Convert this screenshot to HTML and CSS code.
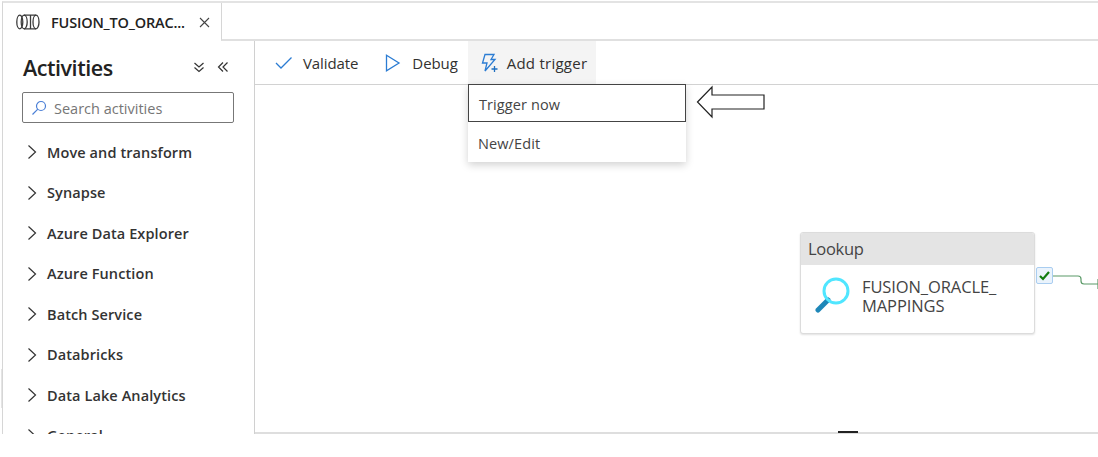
FILE: index.html
```html
<!DOCTYPE html>
<html lang="en">
<head>
<meta charset="utf-8">
<title>FUSION_TO_ORACLE pipeline</title>
<link rel="stylesheet" href="styles.css">
</head>
<body>
<div class="frame">
  <div class="tabbar">
    <div class="tab">
      <svg class="pipe" width="24" height="16" viewBox="0 0 24 16" fill="none" stroke="#3b3b3b" stroke-width="1.300"><ellipse cx="3.800" cy="8" rx="3" ry="6.800"/><ellipse cx="8.200" cy="8" rx="3" ry="6.800"/><path d="M8 1.200h12M8 14.800h12M14.500 1.500v13"/><ellipse cx="20" cy="8" rx="3" ry="6.800"/></svg>
      <span class="tab-title">FUSION_TO_ORAC...</span>
      <svg class="tab-close" width="11" height="11" viewBox="0 0 11 11" stroke="#444" stroke-width="1.100"><path d="M1 1l9 9M10 1l-9 9"/></svg>
    </div>
    <div class="tab-rest"></div>
  </div>
  <div class="main">
    <aside class="sidebar">
      <div class="side-head">
        <h2 class="side-title">Activities</h2>
        <svg width="12" height="12" viewBox="0 0 12 12" fill="none" stroke="#333" stroke-width="1.200"><path d="M1.500 2l4.500 4 4.500-4M1.500 6.500l4.500 4 4.500-4"/></svg>
        <svg class="collapse" width="12" height="12" viewBox="0 0 12 12" fill="none" stroke="#333" stroke-width="1.200"><path d="M6 1.500L1.500 6 6 10.500M10.500 1.500L6 6l4.500 4.500"/></svg>
      </div>
      <div class="search">
        <svg width="16" height="16" viewBox="0 0 16 16" fill="none" stroke="#4a7fd6" stroke-width="1.200"><circle cx="10" cy="6" r="4.500"/><path d="M6.800 9.200L1.500 14.500"/></svg>
        <span>Search activities</span>
      </div>
      <ul class="groups">
        <li class="group"><svg class="chev" width="10" height="16" viewBox="0 0 10 16" fill="none" stroke="#333" stroke-width="1.200"><path d="M1.500 1.500L8.500 8l-7 6.500"/></svg>Move and transform</li>
        <li class="group"><svg class="chev" width="10" height="16" viewBox="0 0 10 16" fill="none" stroke="#333" stroke-width="1.200"><path d="M1.500 1.500L8.500 8l-7 6.500"/></svg>Synapse</li>
        <li class="group"><svg class="chev" width="10" height="16" viewBox="0 0 10 16" fill="none" stroke="#333" stroke-width="1.200"><path d="M1.500 1.500L8.500 8l-7 6.500"/></svg>Azure Data Explorer</li>
        <li class="group"><svg class="chev" width="10" height="16" viewBox="0 0 10 16" fill="none" stroke="#333" stroke-width="1.200"><path d="M1.500 1.500L8.500 8l-7 6.500"/></svg>Azure Function</li>
        <li class="group"><svg class="chev" width="10" height="16" viewBox="0 0 10 16" fill="none" stroke="#333" stroke-width="1.200"><path d="M1.500 1.500L8.500 8l-7 6.500"/></svg>Batch Service</li>
        <li class="group"><svg class="chev" width="10" height="16" viewBox="0 0 10 16" fill="none" stroke="#333" stroke-width="1.200"><path d="M1.500 1.500L8.500 8l-7 6.500"/></svg>Databricks</li>
        <li class="group"><svg class="chev" width="10" height="16" viewBox="0 0 10 16" fill="none" stroke="#333" stroke-width="1.200"><path d="M1.500 1.500L8.500 8l-7 6.500"/></svg>Data Lake Analytics</li>
        <li class="group"><svg class="chev" width="10" height="16" viewBox="0 0 10 16" fill="none" stroke="#333" stroke-width="1.200"><path d="M1.500 1.500L8.500 8l-7 6.500"/></svg>General</li>
      </ul>
    </aside>
    <section class="workspace">
      <div class="toolbar">
        <div class="tool">
          <svg width="18" height="14" viewBox="0 0 18 14" fill="none" stroke="#2b7cd3" stroke-width="1.300"><path d="M1 7l5 5L16.500 1.500"/></svg>
          <span>Validate</span>
        </div>
        <div class="tool tool-debug">
          <svg width="16" height="18" viewBox="0 0 16 18" fill="none" stroke="#2b7cd3" stroke-width="1.300"><path d="M1.500 1.200L14 9 1.500 16.800z"/></svg>
          <span>Debug</span>
        </div>
        <div class="tool tool-active">
          <svg width="20" height="20" viewBox="0 0 20 20" fill="none" stroke="#2b7cd3" stroke-width="1.300"><path d="M6 1.500h9l-3 5h4L6 18l2-8H3.500z"/><path d="M15.500 13v6M12.500 16h6" stroke="#1f6fc0"/></svg>
          <span>Add trigger</span>
        </div>
      </div>
      <div class="canvas">
        <div class="menu">
          <div class="menu-item menu-item-focus">Trigger now</div>
          <div class="menu-item menu-item-plain">New/Edit</div>
        </div>
        <svg class="callout" width="70" height="34" viewBox="0 0 70 34" fill="#fff" stroke="#222" stroke-width="1.200"><path d="M1.500 17L16 2v8h52v14H16v8z"/></svg>
        <div class="node">
          <div class="node-head">Lookup</div>
          <div class="node-body">
            <svg width="38" height="38" viewBox="0 0 38 38" fill="none"><path d="M13 24L3 34" stroke="#1e87b8" stroke-width="5" stroke-linecap="round"/><circle cx="21" cy="15" r="12" stroke="#50e6ff" stroke-width="3"/></svg>
            <div class="node-name"><div>FUSION_ORACLE_</div><div>MAPPINGS</div></div>
          </div>
        </div>
        <div class="port">
          <svg width="11" height="10" viewBox="0 0 11 10" fill="none" stroke="#107c10" stroke-width="2.200"><path d="M1 5l3 3 6-7"/></svg>
        </div>
        <svg class="link" width="60" height="20" viewBox="0 0 60 20" fill="none" stroke="#5b9a68" stroke-width="1.200"><path d="M0 2h25q3 0 3 3v2q0 3 3 3h14M45 5v10"/></svg>
      </div>
    </section>
  </div>
  <div class="edge-mark"></div>
  <div class="scroll-mark"></div>
</div>
</body>
</html>
```
FILE: styles.css
```css
* { box-sizing: border-box; }
html, body { margin: 0; padding: 0; background: #fff; }
body { font-family: "Open Sans", "Noto Sans", "Liberation Sans", sans-serif; color: #323130; width: 1098px; height: 457px; overflow: hidden; }
.frame { position: relative; height: 434px; padding: 1px 0 0 2px; overflow: hidden; display: flex; flex-direction: column; }
.tabbar { display: flex; height: 40px; flex: none; border-top: 2px solid #e3e3e3; border-left: 1px solid #d6d6d6; }
.tab { width: 218px; display: flex; align-items: center; padding: 0 0 0 13px; background: #fff; }
.pipe { flex: none; }
.tab-title { font-size: 14.5px; font-weight: 600; color: #222; margin-left: 11px; white-space: nowrap; letter-spacing: -0.18px; width: 138px; }
.tab-close { margin-left: 10px; flex: none; }
.tab-rest { flex: 1; border-left: 1px solid #d6d6d6; border-bottom: 2px solid #e0e0e0; }
.main { flex: 1; display: flex; min-height: 0; }
.sidebar { width: 253px; flex: none; border-left: 1px solid #d6d6d6; border-right: 1px solid #d0d0d0; padding: 0 25px 0 19px; overflow: hidden; }
.side-head { display: flex; align-items: center; height: 51px; padding-top: 1px; }
.side-title { margin: 0; flex: 1; font-size: 21.5px; font-weight: 600; color: #222; letter-spacing: -0.45px; padding-left: 1px; }
.collapse { margin-left: 12px; }
.search { height: 31px; width: 212px; border: 1px solid #777; border-radius: 2px; display: flex; align-items: center; gap: 7px; padding: 1px 0 0 8px; font-size: 14.5px; color: #767676; letter-spacing: 0; flex: none; }
.groups { list-style: none; margin: 9px 0 0; padding: 0 0 0 5px; }
.group { height: 40.5px; display: flex; align-items: center; gap: 10px; font-size: 14.5px; font-weight: 600; color: #333; letter-spacing: 0.1px; white-space: nowrap; }
.chev { flex: none; }
.workspace { flex: 1; display: flex; flex-direction: column; min-width: 0; border-bottom: 2px solid #dedede; }
.toolbar { height: 44px; flex: none; display: flex; align-items: stretch; border-bottom: 1px solid #d2d2d2; padding-left: 20px; }
.tool { display: flex; align-items: center; gap: 10px; font-size: 15px; color: #323130; letter-spacing: -0.1px; }
.tool-debug { margin-left: 27px; gap: 11px; }
.tool-active { margin-left: 10px; width: 128px; padding-left: 11px; gap: 8px; background: #f4f4f4; letter-spacing: 0.25px; }
.canvas { position: relative; flex: 1; min-height: 0; }
.menu { position: absolute; left: 213px; top: -1px; width: 218px; background: #fff; box-shadow: 0 3px 8px rgba(0, 0, 0, 0.18); font-size: 14.5px; letter-spacing: 0.1px; }
.menu-item { display: flex; align-items: center; padding: 2px 0 0 10px; color: #444; }
.menu-item-focus { height: 38px; border: 1px solid #444; }
.menu-item-plain { height: 40px; }
.callout { position: absolute; left: 441px; top: 0; }
.node { position: absolute; left: 545px; top: 147px; width: 235px; height: 102px; background: #fff; border: 1px solid #dcdcdc; border-radius: 3px; box-shadow: 0 1px 2px rgba(0, 0, 0, 0.12); overflow: hidden; }
.node-head { height: 32px; background: #e4e4e4; padding: 0 0 1px 7px; display: flex; align-items: center; font-size: 16.5px; color: #444; letter-spacing: -0.3px; }
.node-body { display: flex; padding: 11px 0 0 14px; gap: 9px; }
.node-name { font-size: 16.5px; line-height: 19px; color: #444; letter-spacing: -0.1px; margin-top: 1px; }
.port { position: absolute; left: 781px; top: 182px; width: 17px; height: 17px; background: #eaf3fc; border: 1px solid #a9cdf0; border-radius: 2px; display: flex; align-items: center; justify-content: center; }
.link { position: absolute; left: 798px; top: 189px; }
.edge-mark { position: absolute; left: 1px; top: 369px; width: 1px; height: 39px; background: #e4e4e4; }
.scroll-mark { position: absolute; left: 838px; top: 431px; width: 20px; height: 2px; background: #222; }
```
